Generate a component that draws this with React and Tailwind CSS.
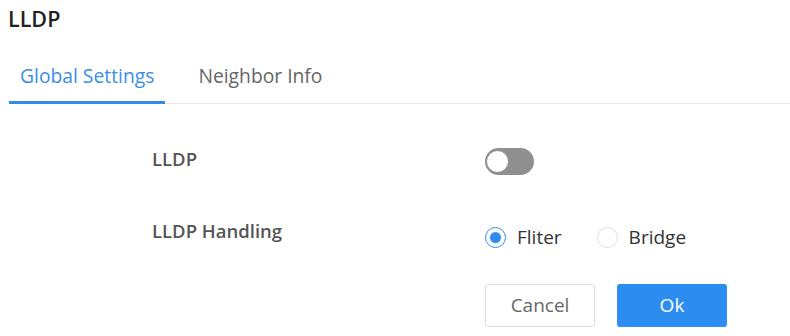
import React, { useState } from 'react';

function Toggle({ on, onChange }) {
  return (
    <button
      type="button"
      onClick={() => onChange(!on)}
      className={`relative block w-[49px] h-[27px] rounded-full ${on ? 'bg-[#2d8cf0]' : 'bg-[#8f8f8f]'}`}
    >
      <span
        className={`absolute top-[2px] w-[23px] h-[23px] rounded-full bg-white border border-[#8a8a8a] ${on ? 'left-[24px]' : 'left-[1px]'}`}
      />
    </button>
  );
}

function Radio({ checked, label, onClick }) {
  return (
    <label onClick={onClick} className="flex items-center gap-[11px] cursor-pointer">
      <span
        className={`flex items-center justify-center w-[21px] h-[21px] rounded-full border bg-white ${checked ? 'border-[#2d8cf0]' : 'border-[#dedede]'}`}
      >
        {checked && <span className="w-[11px] h-[11px] rounded-full bg-[#2d8cf0]" />}
      </span>
      <span className="text-[19px] leading-[24px] text-[#333]">{label}</span>
    </label>
  );
}

export default function App() {
  const [tab, setTab] = useState('global');
  const [enabled, setEnabled] = useState(false);
  const [handling, setHandling] = useState('filter');

  return (
    <div className="w-[790px] h-[336px] overflow-hidden bg-white font-['Open_Sans',sans-serif]">
      <h1 className="pl-[8px] pt-[4px] text-[21.5px] leading-[30px] font-semibold text-[#222]">LLDP</h1>

      {/* tabs */}
      <div className="mt-[20px] ml-[9px] flex gap-[22px] border-b border-[#e8e8e8]">
        <button
          onClick={() => setTab('global')}
          className={`-mb-px px-[11px] pt-[10px] pb-[13px] border-b-[3px] text-[19.3px] leading-[24px] ${tab === 'global' ? 'border-[#2f8de4] text-[#3a8ee6]' : 'border-transparent text-[#666]'}`}
        >
          Global Settings
        </button>
        <button
          onClick={() => setTab('neighbor')}
          className={`-mb-px px-[11px] pt-[10px] pb-[13px] border-b-[3px] text-[19.3px] leading-[24px] ${tab === 'neighbor' ? 'border-[#2f8de4] text-[#3a8ee6]' : 'border-transparent text-[#666]'}`}
        >
          Neighbor Info
        </button>
      </div>

      {/* form */}
      <div className="pt-[43px] pl-[152px]">
        <div className="flex items-start">
          <div className="w-[333px] text-[18.5px] leading-[24px] font-semibold text-[#555]">LLDP</div>
          <div className="mt-[1px] flex">
            <Toggle on={enabled} onChange={setEnabled} />
          </div>
        </div>

        <div className="flex items-start mt-[44px]">
          <div className="w-[333px] text-[18.5px] leading-[24px] font-semibold text-[#555]">LLDP Handling</div>
          <div className="mt-[6px] flex items-center gap-[35px]">
            <Radio checked={handling === 'filter'} label="Fliter" onClick={() => setHandling('filter')} />
            <Radio checked={handling === 'bridge'} label="Bridge" onClick={() => setHandling('bridge')} />
          </div>
        </div>

        <div className="flex mt-[35px] pl-[333px] gap-[22px]">
          <button className="w-[110px] h-[43px] rounded-[3px] border border-[#dcdcdc] bg-white text-[19px] text-[#666]">
            Cancel
          </button>
          <button className="w-[110px] h-[43px] rounded-[3px] bg-[#2d8cf0] text-[19px] text-white">
            Ok
          </button>
        </div>
      </div>
    </div>
  );
}
